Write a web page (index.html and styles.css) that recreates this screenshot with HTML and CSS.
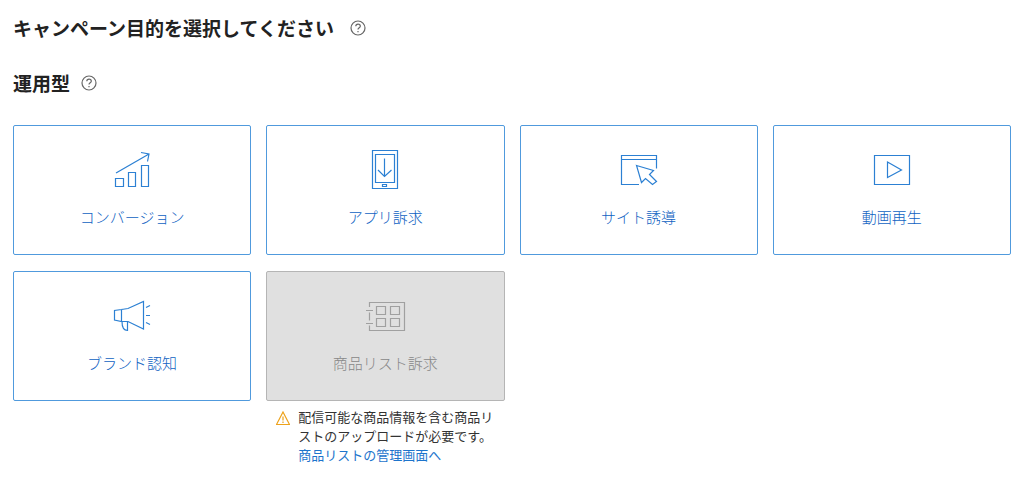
FILE: index.html
```
<!DOCTYPE html>
<html lang="ja">
<head>
<meta charset="utf-8">
<meta name="viewport" content="width=device-width, initial-scale=1">
<title>キャンペーン目的</title>
<link rel="stylesheet" href="styles.css">
</head>
<body>
<main class="page">
  <header class="heading heading-main">
    <h1 class="title">キャンペーン目的を選択してください</h1>
    <button class="help" type="button" aria-label="ヘルプ">
      <svg viewBox="0 0 16 16" aria-hidden="true"><circle cx="8" cy="8" r="7"/><path d="M5.8 6.3C5.8 3.4 10.3 3.5 10.3 6.2C10.3 7.8 8 7.8 8 9.6M8 11v1.3"/></svg>
    </button>
  </header>
  <section>
    <div class="heading">
      <h2 class="title">運用型</h2>
      <button class="help" type="button" aria-label="ヘルプ">
        <svg viewBox="0 0 16 16" aria-hidden="true"><circle cx="8" cy="8" r="7"/><path d="M5.8 6.3C5.8 3.4 10.3 3.5 10.3 6.2C10.3 7.8 8 7.8 8 9.6M8 11v1.3"/></svg>
      </button>
    </div>
    <ul class="goals">
      <li>
        <button class="card" type="button">
          <svg class="icon" viewBox="0 0 42 42" aria-hidden="true"><path d="M4.5 29.5h8v8h-8zM17.5 23.5h7v14h-7zM30.5 16.5h7v21h-7zM5 24L38 5M30 3.5L38 5L36.5 12.5"/></svg>
          <span>コンバージョン</span>
        </button>
      </li>
      <li>
        <button class="card" type="button">
          <svg class="icon" viewBox="0 0 42 42" aria-hidden="true"><path d="M8.5 1.5h25v38h-25zM11.5 5.5h19v28h-19zM20.5 9.5v18M14 21l6.5 6.5L27.5 21M18.5 35.5h4v2h-4z"/></svg>
          <span>アプリ訴求</span>
        </button>
      </li>
      <li>
        <button class="card" type="button">
          <svg class="icon" viewBox="0 0 42 42" aria-hidden="true"><path d="M21 35.5H3.5v-29h35v13M3.5 10.5h35M18.5 16.5l17 5l-4 4l7 7l-4 3l-7-6l-4 4z"/></svg>
          <span>サイト誘導</span>
        </button>
      </li>
      <li>
        <button class="card" type="button">
          <svg class="icon" viewBox="0 0 42 42" aria-hidden="true"><path d="M3.5 6.5h35v29h-35zM16.5 13l14 8l-14 7.5z"/></svg>
          <span>動画再生</span>
        </button>
      </li>
      <li>
        <button class="card" type="button">
          <svg class="icon" viewBox="0 0 42 42" aria-hidden="true"><path d="M10.5 14.5L3.5 15.5v9.5l7 1.5zM10.5 14.5L17 13.5L32.5 6.5v27.5L17 26.5h-6.5M11 26.5C11 32 12 35.5 16.5 35.5v-9M35 12.5l4-2M35 20.5h4M35 27.5l4 2"/></svg>
          <span>ブランド認知</span>
        </button>
      </li>
      <li>
        <button class="card" type="button" disabled>
          <svg class="icon" viewBox="0 0 42 42" aria-hidden="true"><path d="M5.5 12V7.5h35v28h-35V30.5M5.5 17.5v8M2 15.5h7M2 28.5h7M12.5 11.5h9v8h-9zM26.5 11.5h9v8h-9zM12.5 23.5h9v8h-9zM26.5 23.5h9v8h-9z"/></svg>
          <span>商品リスト訴求</span>
        </button>
        <div class="note">
          <svg class="warning" viewBox="0 0 14 14" aria-hidden="true"><path d="M7 1L13.5 13.5H.5zM7 5.5v4M7 10.5v1.5"/></svg>
          <p>配信可能な商品情報を含む商品リストのアップロードが必要です。<br><a href="#">商品リストの管理画面へ</a></p>
        </div>
      </li>
    </ul>
  </section>
</main>
</body>
</html>
```
FILE: styles.css
```
* {
  box-sizing: border-box;
}

body {
  margin: 0;
  background: #fff;
  color: #222;
  font-family: "Noto Sans CJK JP", sans-serif;
}

.page {
  padding: 14px 13px;
}

.heading {
  display: flex;
  align-items: center;
  gap: 11px;
  margin-bottom: 28px;
}

.heading-main {
  gap: 16px;
  margin-bottom: 27px;
}

.title {
  margin: 0;
  font-size: 19px;
  line-height: 28px;
  font-weight: 700;
}

.help {
  display: block;
  width: 16px;
  height: 16px;
  padding: 0;
  border: 0;
  background: none;
  color: #666;
  cursor: pointer;
}

.help svg {
  display: block;
}

svg {
  fill: none;
  stroke: currentColor;
  stroke-width: 1.2;
}

.goals {
  display: grid;
  grid-template-columns: repeat(4, 1fr);
  gap: 16px 15px;
  margin: 0;
  padding: 0;
  list-style: none;
}

.card {
  display: flex;
  flex-direction: column;
  align-items: center;
  gap: 14px;
  width: 100%;
  padding: 23px 8px 25px;
  border: 1px solid #509add;
  border-radius: 2px;
  background: #fff;
  color: #0f62c2;
  font: inherit;
  font-size: 15px;
  font-weight: 300;
  line-height: 24px;
  cursor: pointer;
}

.card:disabled {
  border-color: #b5b5b5;
  background: #e0e0e0;
  color: #888;
  cursor: default;
}

.icon {
  width: 42px;
  height: 42px;
  color: #2c80d3;
}

.card:disabled .icon {
  color: #a0a0a0;
}

.note {
  display: flex;
  gap: 8px;
  padding: 6px 8px 0 10px;
  color: #333;
  font-size: 13px;
  line-height: 19px;
}

.note p {
  margin: 0;
}

.note a {
  color: #1d74cc;
  text-decoration: none;
}

.warning {
  flex: none;
  width: 14px;
  height: 14px;
  margin-top: 4px;
  color: #eda21b;
}
```
